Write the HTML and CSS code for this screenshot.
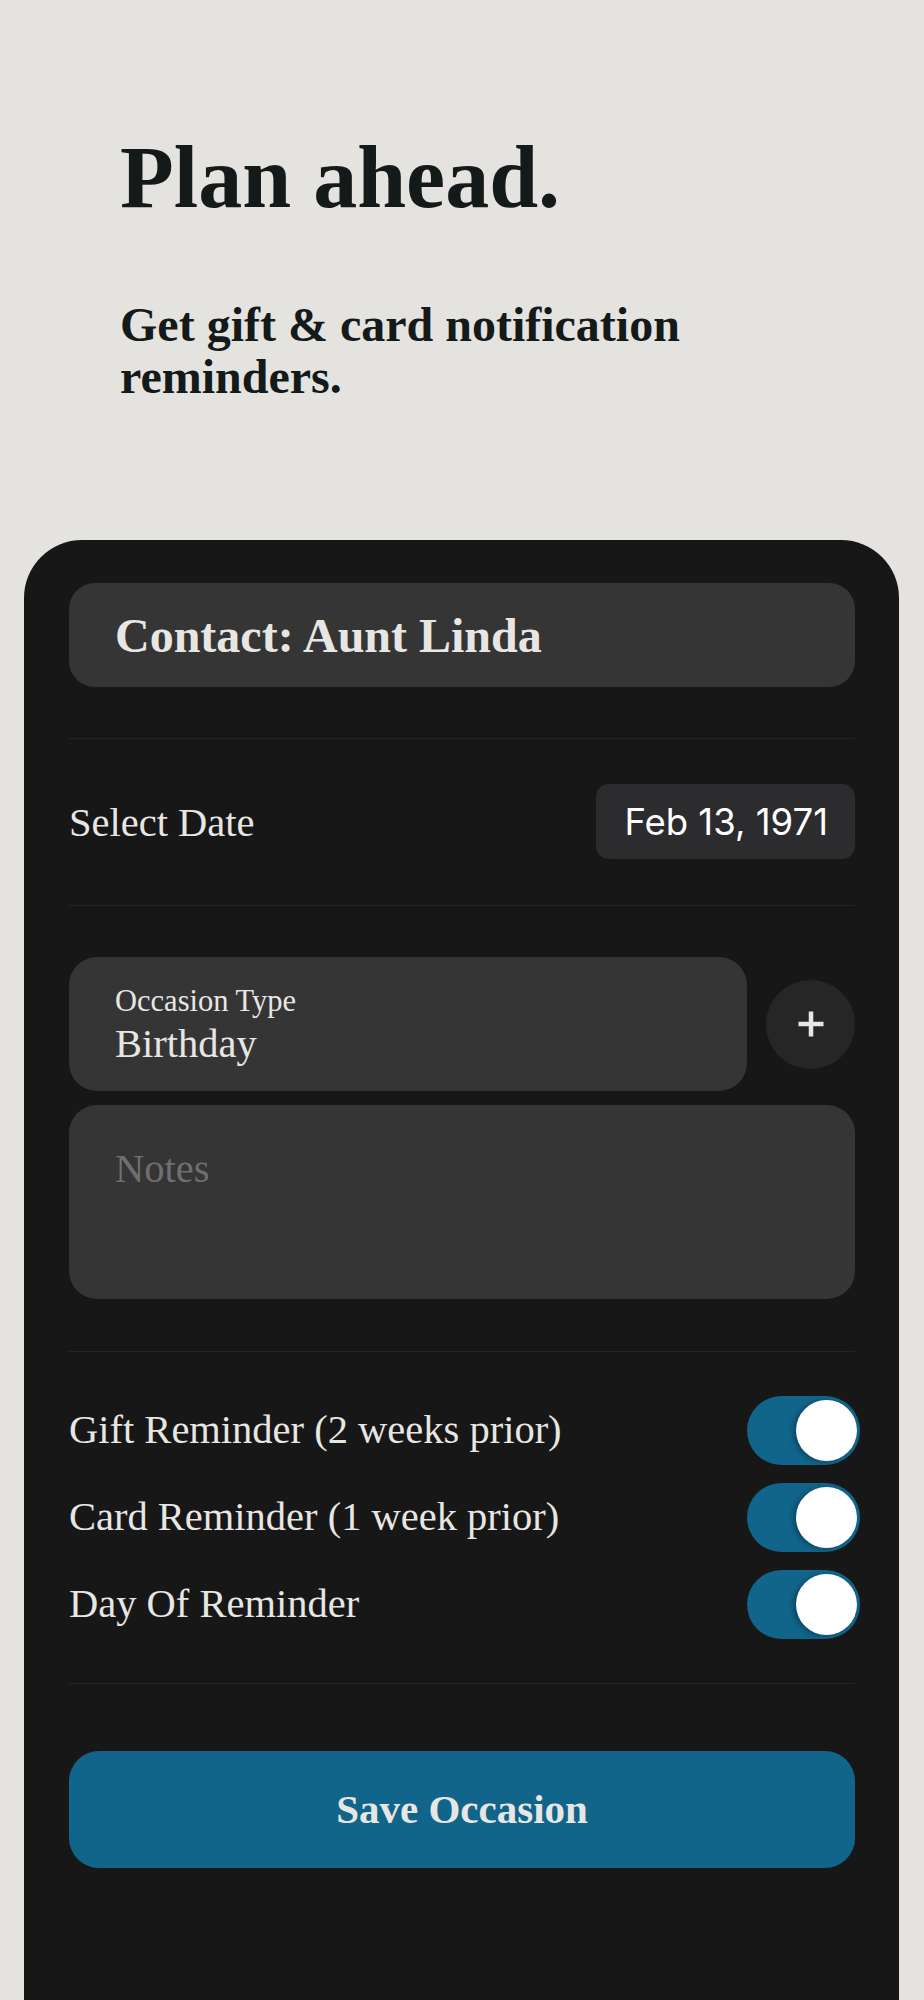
FILE: index.html
```html
<!DOCTYPE html>
<html lang="en">
<head>
<meta charset="utf-8">
<title>Plan ahead</title>
<link rel="stylesheet" href="styles.css">
</head>
<body>
<header class="hero">
  <h1 class="hero-title">Plan ahead.</h1>
  <p class="hero-sub">Get gift &amp; card notification reminders.</p>
</header>

<main class="card">
  <div class="contact">Contact: Aunt Linda</div>

  <hr class="divider">

  <div class="date-row">
    <span class="row-label">Select Date</span>
    <span class="date-pill">Feb 13, 1971</span>
  </div>

  <hr class="divider">

  <div class="occasion-row">
    <div class="field occasion">
      <div class="field-label">Occasion Type</div>
      <div class="field-value">Birthday</div>
    </div>
    <button class="add-btn" aria-label="Add occasion type">
      <svg width="28" height="28" viewBox="0 0 28 28" aria-hidden="true">
        <path d="M14 1.5v25M1.5 14h25" stroke="#e8e6e2" stroke-width="4.5" fill="none"/>
      </svg>
    </button>
  </div>

  <div class="field notes">
    <span class="placeholder">Notes</span>
  </div>

  <hr class="divider">

  <div class="toggles">
    <div class="toggle-row">
      <span class="row-label">Gift Reminder (2 weeks prior)</span>
      <span class="switch"><span class="knob"></span></span>
    </div>
    <div class="toggle-row">
      <span class="row-label">Card Reminder (1 week prior)</span>
      <span class="switch"><span class="knob"></span></span>
    </div>
    <div class="toggle-row">
      <span class="row-label">Day Of Reminder</span>
      <span class="switch"><span class="knob"></span></span>
    </div>
  </div>

  <hr class="divider">

  <button class="save-btn">Save Occasion</button>
</main>
</body>
</html>
```

FILE: styles.css
```css
* {
  box-sizing: border-box;
}

html, body {
  margin: 0;
  padding: 0;
}

body {
  background: #e4e3df;
  font-family: "Liberation Serif", "Times New Roman", serif;
  color: #141919;
}

.hero {
  padding: 125px 120px 0 120px;
  height: 540px;
}

.hero-title {
  margin: 0;
  font-size: 88px;
  font-weight: 700;
  line-height: 1.2;
  letter-spacing: 0;
}

.hero-sub {
  margin: 68px 0 0 0;
  font-size: 48px;
  font-weight: 700;
  line-height: 52px;
}

.card {
  margin: 0 25px 0 24px;
  min-height: 1460px;
  background: #171717;
  border-radius: 58px 58px 0 0;
  padding: 43px 44px 80px 45px;
  color: #e8e6e2;
}

.contact {
  background: #353535;
  border-radius: 26px;
  padding: 24px 46px 22px 46px;
  font-size: 48px;
  font-weight: 700;
  line-height: 1.2;
  height: 104px;
}

.divider {
  border: 0;
  height: 1px;
  background: #242424;
  margin: 0;
}

.contact + .divider {
  margin-top: 51px;
}

.date-row {
  display: flex;
  align-items: center;
  justify-content: space-between;
  padding: 45px 0 46px 0;
}

.row-label {
  font-size: 40.5px;
  line-height: 1.2;
}

.date-row .row-label {
  padding-top: 3px;
}

.date-pill {
  background: #2c2c2e;
  border-radius: 13px;
  height: 75px;
  padding: 0 27px 0 28px;
  display: flex;
  align-items: center;
  font-family: "Inter", "Liberation Sans", sans-serif;
  font-size: 36.5px;
  color: #ffffff;
  letter-spacing: 0;
}

.occasion-row {
  display: grid;
  grid-template-columns: 1fr 89px;
  column-gap: 19px;
  align-items: center;
  margin-top: 51px;
}

.field {
  background: #353535;
  border-radius: 28px;
}

.occasion {
  height: 134px;
  padding: 26px 46px 0 46px;
}

.field-label {
  font-size: 30.5px;
  line-height: 36px;
}

.field-value {
  margin-top: 1px;
  font-size: 40.5px;
  line-height: 48px;
}

.add-btn {
  width: 89px;
  height: 89px;
  border-radius: 50%;
  border: 0;
  padding: 0;
  background: #262626;
  display: flex;
  align-items: center;
  justify-content: center;
}

.notes {
  margin-top: 14px;
  height: 194px;
  padding: 40px 46px 0 46px;
}

.placeholder {
  display: block;
  font-size: 40.5px;
  line-height: 48px;
  color: #6f6f6f;
}

.notes + .divider {
  margin-top: 52px;
}

.toggles {
  display: flex;
  flex-direction: column;
  gap: 18px;
  padding: 44px 0 44px 0;
}

.toggle-row {
  display: flex;
  align-items: center;
  justify-content: space-between;
  height: 69px;
}

.switch {
  width: 113px;
  height: 69px;
  margin-right: -5px;
  border-radius: 35px;
  background: #11648a;
  display: flex;
  align-items: center;
  justify-content: flex-end;
  padding-right: 3px;
}

.knob {
  width: 61px;
  height: 61px;
  border-radius: 50%;
  background: #ffffff;
  box-shadow: -3px 1px 5px rgba(0, 0, 0, 0.28);
}

.save-btn {
  display: flex;
  align-items: center;
  justify-content: center;
  width: 100%;
  height: 117px;
  margin-top: 67px;
  border: 0;
  border-radius: 30px;
  background: #11648a;
  color: #e8e6e2;
  font-family: "Liberation Serif", "Times New Roman", serif;
  font-size: 41px;
  font-weight: 700;
  line-height: 1.2;
}
```
